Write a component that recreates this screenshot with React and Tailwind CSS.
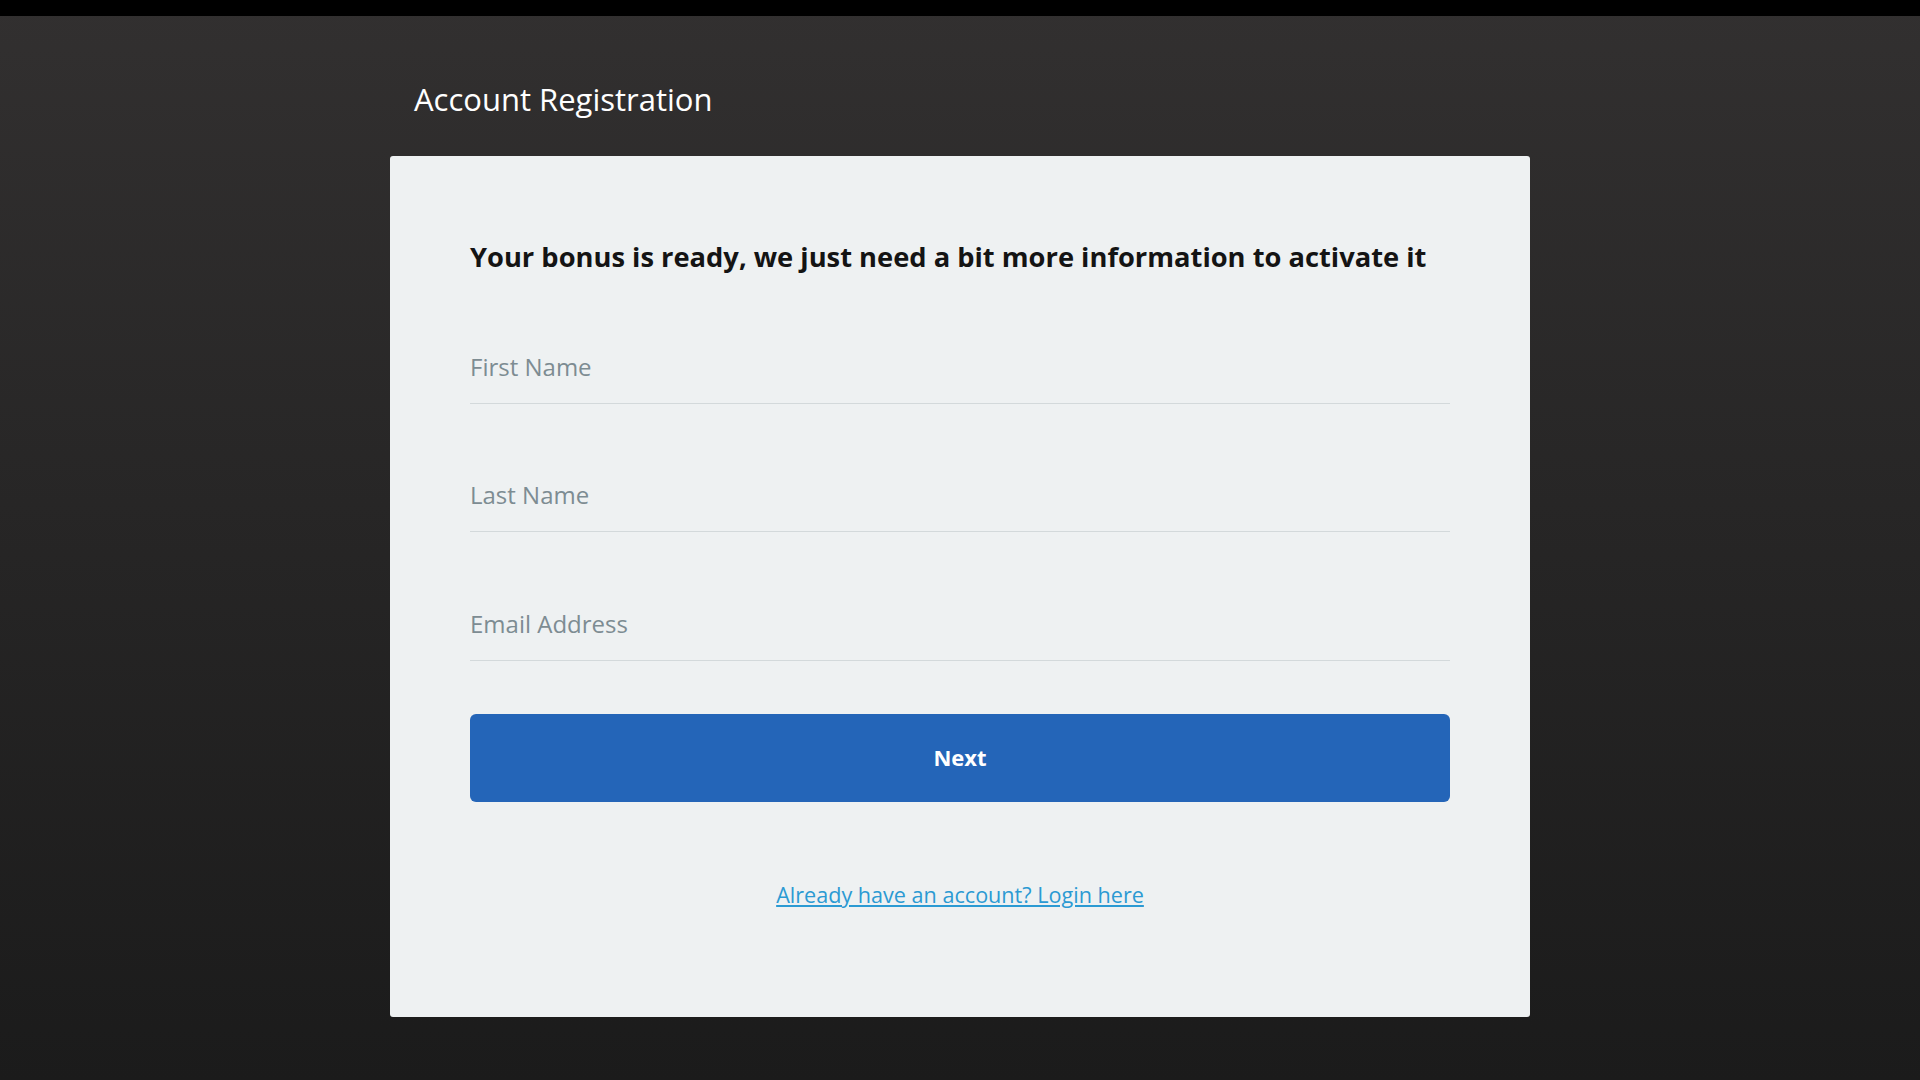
export default function App() {
  const inputClass =
    "w-full h-[74px] bg-transparent border-0 border-b border-[#d3d9db] text-[24px] text-[#37474f] placeholder:text-[#7d8c92] outline-none";

  return (
    <div className="min-h-screen w-full bg-gradient-to-b from-[#323030] to-[#1b1b1b] flex flex-col font-['Open_Sans',sans-serif]">
      {/* top bar */}
      <div className="h-4 w-full bg-black" />

      <div className="w-[1140px] mx-auto flex flex-col">
        <h1 className="mt-[65px] ml-6 text-[31px] leading-9 text-white">
          Account Registration
        </h1>

        <div className="mt-[39px] bg-[#eef1f2] rounded-[3px] px-20 pt-[83px] pb-[107px] flex flex-col">
          <h2 className="text-[27.3px] leading-9 font-bold text-[#141414]">
            Your bonus is ready, we just need a bit more information to activate it
          </h2>

          <form className="mt-[54.5px] flex flex-col gap-[54.5px]" onSubmit={(e) => e.preventDefault()}>
            <input type="text" placeholder="First Name" className={inputClass} />
            <input type="text" placeholder="Last Name" className={inputClass} />
            <input type="email" placeholder="Email Address" className={inputClass} />

            <button
              type="submit"
              className="-mt-[1.5px] h-[88px] w-full rounded-[6px] bg-[#2465b8] text-white text-[22px] font-bold"
            >
              Next
            </button>
          </form>

          <a
            href="#"
            className="mt-[78px] self-center text-[21.6px] leading-[30px] text-[#2b9ad3] underline"
          >
            Already have an account? Login here
          </a>
        </div>
      </div>
    </div>
  );
}
